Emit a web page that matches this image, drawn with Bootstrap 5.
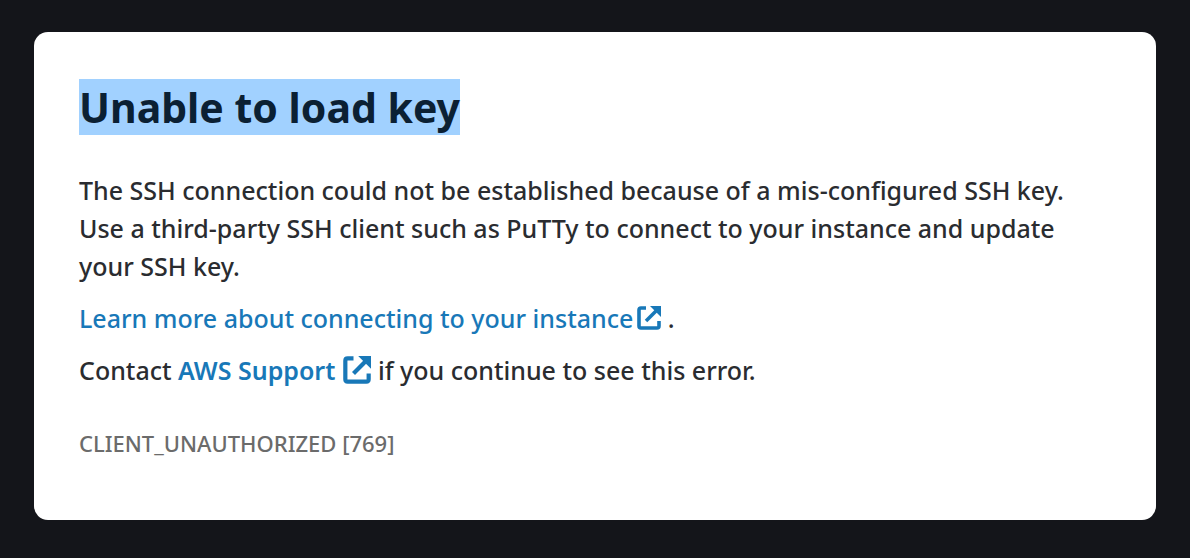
<!DOCTYPE html>
<html lang="en">
<head>
<meta charset="utf-8">
<meta name="viewport" content="width=device-width, initial-scale=1">
<title>Unable to load key</title>
<link rel="stylesheet" href="https://cdn.jsdelivr.net/npm/bootstrap@5.3.0/dist/css/bootstrap.min.css">
<style>
body{background:#14151a;color:#2a2c30;font-family:"Noto Sans","Open Sans",sans-serif;font-size:25px;line-height:38px;font-weight:500}
.error-page{padding:32px 34px 38px}
.error-card{border:0;border-radius:14px;padding:47px 45px 61px;background:#fff;color:inherit}
.error-title{font-size:41px;line-height:56px;font-weight:700;color:#0b2033;margin-bottom:36px}
.error-title mark{background:#a1d1ff;color:inherit;padding:0;display:inline-block}
.error-card p{margin-bottom:14px}
.error-card a{color:#1878b8;text-decoration:none}
.external{width:24px;height:24px;vertical-align:-2px}
.external-lg{width:28px;height:28px;vertical-align:-4px}
.error-card .error-code{font-size:22px;line-height:32px;color:#6b6b6b;margin:24px 0 0}
</style>
</head>
<body>
<svg class="d-none" aria-hidden="true">
<symbol id="external-icon" viewBox="0 0 24 24">
<path d="M9 2H4Q2 2 2 4V20Q2 22 4 22H20Q22 22 22 20V15" fill="none" stroke="currentColor" stroke-width="3.6"/>
<path d="M9 15L19 5" fill="none" stroke="currentColor" stroke-width="3.6"/>
<path d="M13 0H24V11Z" fill="currentColor"/>
</symbol>
</svg>
<main class="container-fluid error-page">
<section class="card error-card">
<h1 class="error-title"><mark>Unable to load key</mark></h1>
<p>The SSH connection could not be established because of a mis-configured SSH key. Use a third-party SSH client such as PuTTy to connect to your instance and update your SSH key.</p>
<p><a href="#">Learn more about connecting to your instance<svg class="external ms-1" aria-hidden="true"><use href="#external-icon"/></svg></a> .</p>
<p>Contact <a href="#"><span class="fw-semibold">AWS Support</span><svg class="external-lg ms-2" aria-hidden="true"><use href="#external-icon"/></svg></a> if you continue to see this error.</p>
<p class="error-code">CLIENT_UNAUTHORIZED [769]</p>
</section>
</main>
<script src="https://cdn.jsdelivr.net/npm/bootstrap@5.3.0/dist/js/bootstrap.bundle.min.js"></script>
</body>
</html>
